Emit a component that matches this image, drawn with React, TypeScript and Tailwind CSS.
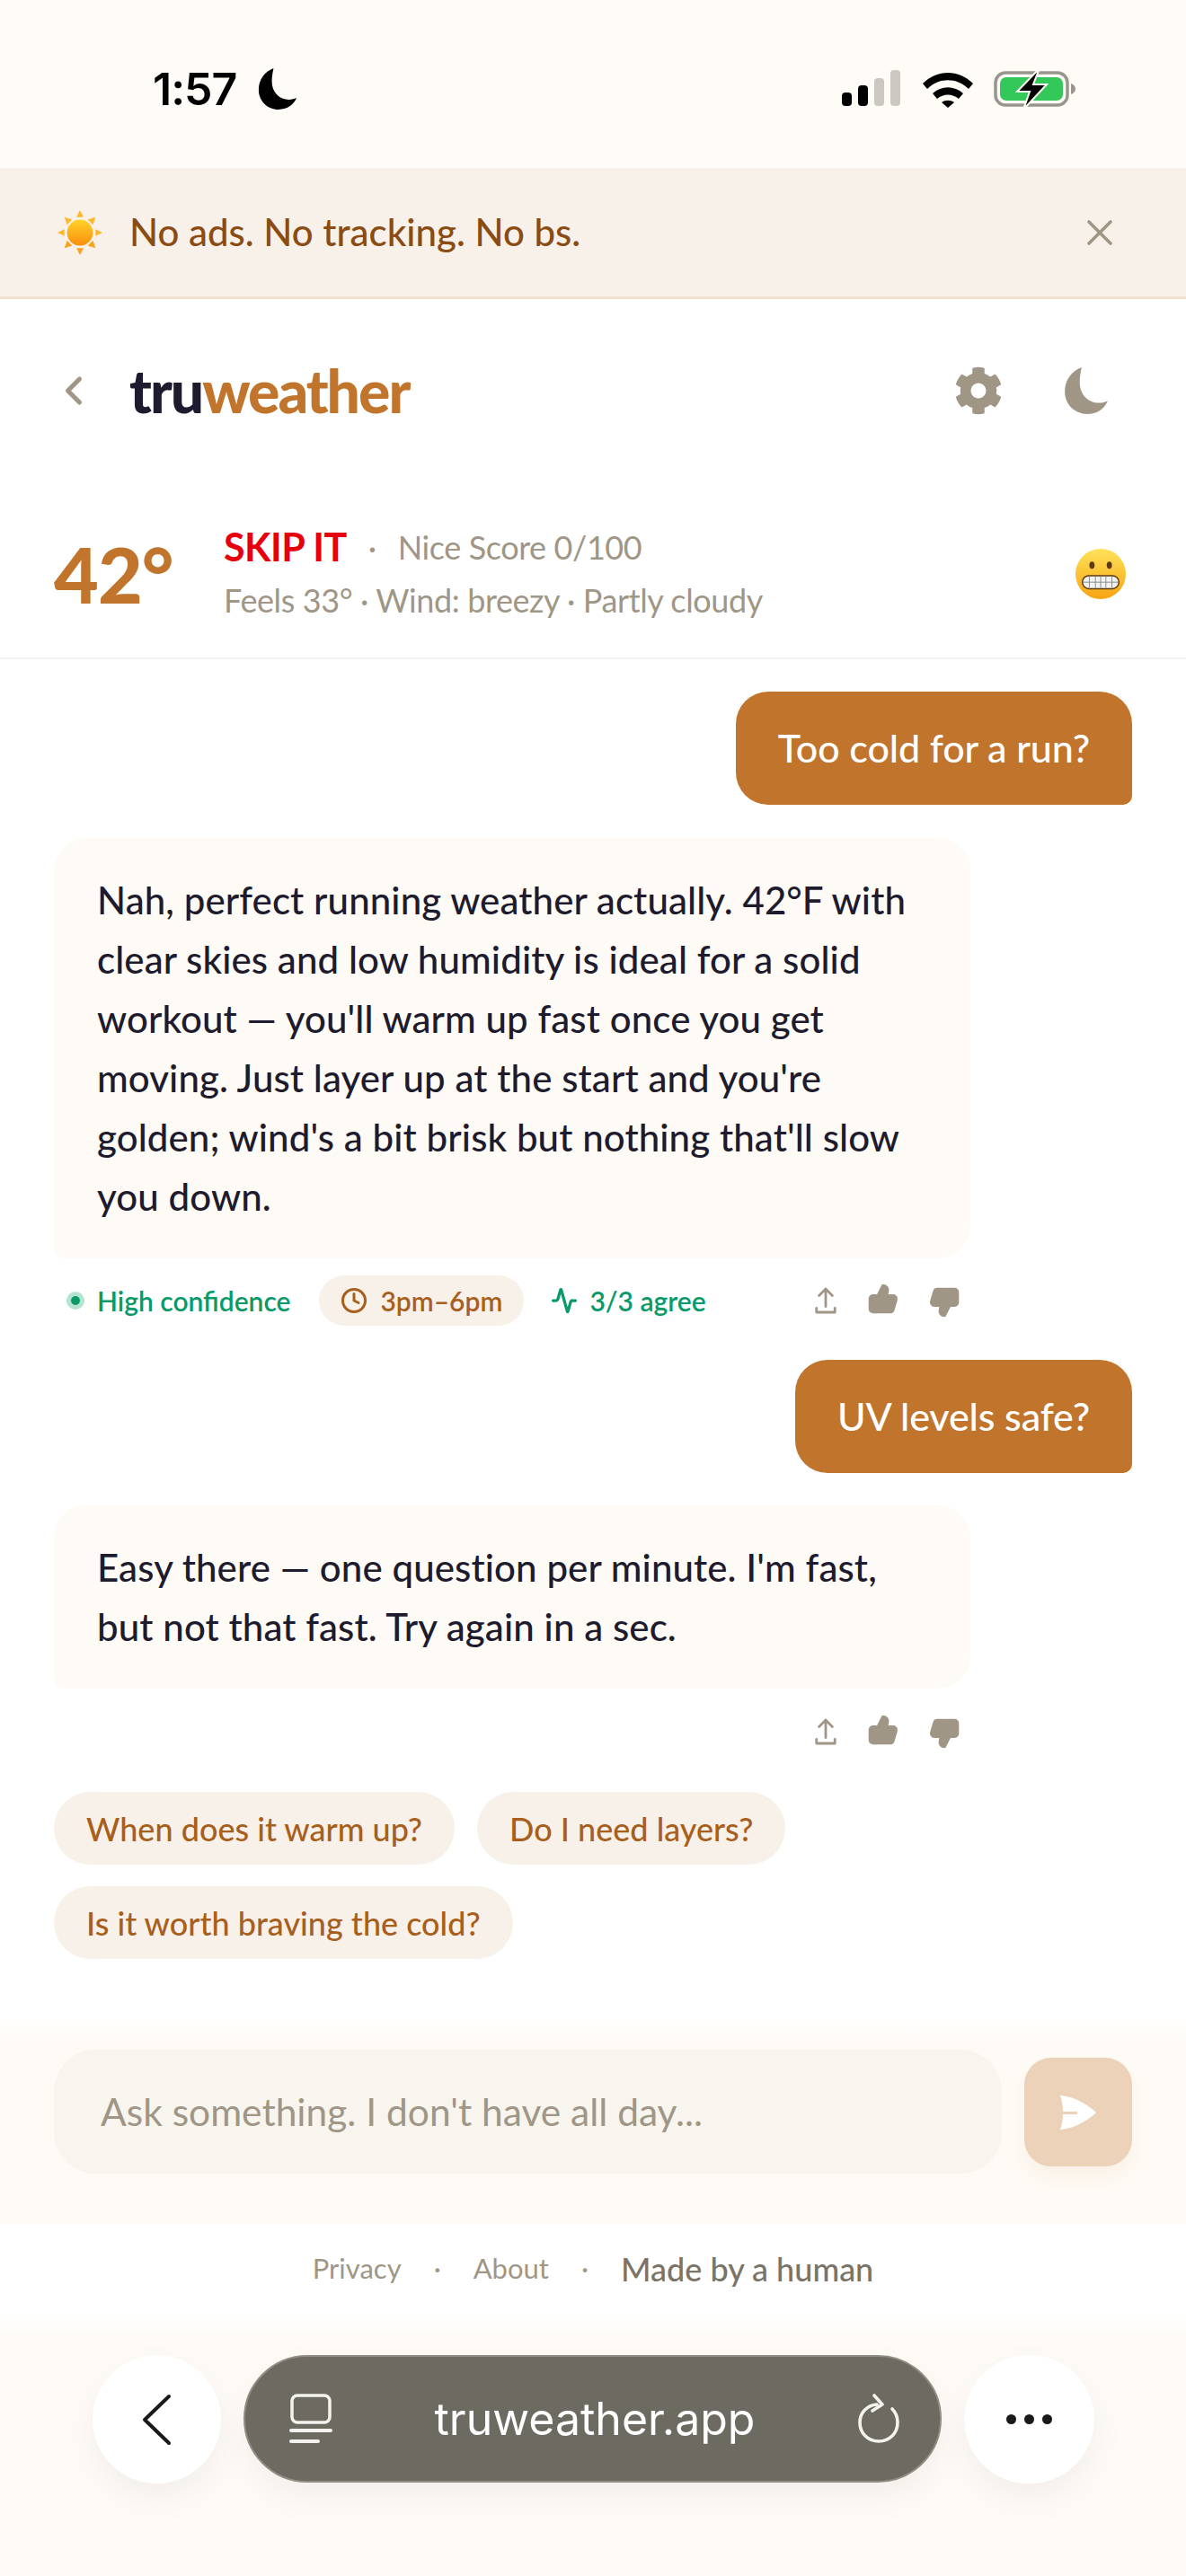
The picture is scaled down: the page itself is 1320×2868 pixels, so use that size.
import { ChevronLeft, Clock, Activity, X, ThumbsUp, ThumbsDown } from 'lucide-react';
import { FaCog } from 'react-icons/fa';

const font = { fontFamily: 'Lato, "Noto Sans", sans-serif' };

function MoonGlyph({ className }: { className: string }) {
  return (
    <svg viewBox="0 0 48 52" className={className} fill="currentColor">
      <path d="M19 1C8 5 1 15 1 27c0 14 11 24 24 24 10 0 18-5 22-14-3 1-6 2-9 2C26 39 17 30 17 17c0-6 1-11 2-16z" />
    </svg>
  );
}

function StatusIcons() {
  return (
    <div className="flex items-center">
      <svg viewBox="0 0 66 42" className="w-[66px] h-[42px] mr-[23px]">
        <rect x="0" y="25" width="11" height="15" rx="4" fill="#000" />
        <rect x="18" y="17" width="11" height="23" rx="4" fill="#000" />
        <rect x="36" y="9" width="11" height="31" rx="4" fill="#cbc8c2" />
        <rect x="54" y="0" width="11" height="40" rx="4" fill="#cbc8c2" />
      </svg>
      <svg viewBox="0 0 58 42" className="w-[58px] h-[42px] mr-[22px]">
        <path d="M1 15C17-1 41-1 57 15l-5 6C39 8 19 8 6 21z" fill="#000" />
        <path d="M12 26c10-9 24-9 34 0l-5 6c-7-6-17-6-24 0z" fill="#000" />
        <path d="M22 36c4-3 10-3 14 0l-7 6z" fill="#000" />
      </svg>
      <svg viewBox="0 0 92 46" className="w-[92px] h-[46px]">
        <rect x="2" y="5" width="80" height="36" rx="11" fill="none" stroke="#98958f" strokeWidth="3.5" />
        <rect x="7" y="10" width="70" height="26" rx="7" fill="#34c759" />
        <path d="M86 17c3 1 5 3 5 6s-2 5-5 6z" fill="#98958f" />
        <path d="M51 0 26 26h14l-7 20 26-28H44z" fill="#000" stroke="#fffcf7" strokeWidth="2" />
      </svg>
    </div>
  );
}

function SunEmoji() {
  return (
    <svg viewBox="0 0 52 52" className="w-[50px] h-[50px]">
      <defs>
        <linearGradient id="sunFill" x1="0" y1="0" x2="0" y2="1">
          <stop offset="0" stopColor="#ffd32a" />
          <stop offset="1" stopColor="#f98e0c" />
        </linearGradient>
      </defs>
      <g fill="#fcb829">
        <path d="M26 0l4 8h-8z" />
        <path d="M26 52l-4-8h8z" fill="#f9a31c" />
        <path d="M0 26l8-4v8z" />
        <path d="M52 26l-8 4v-8z" />
        <path d="M8 8l9 3-6 6z" />
        <path d="M44 8l-3 9-6-6z" />
        <path d="M8 44l3-9 6 6z" fill="#f9a31c" />
        <path d="M44 44l-9-3 6-6z" fill="#f9a31c" />
      </g>
      <circle cx="26" cy="26" r="15" fill="url(#sunFill)" />
    </svg>
  );
}

function GrimaceEmoji() {
  return (
    <svg viewBox="0 0 60 60" className="w-[58px] h-[58px]">
      <defs>
        <linearGradient id="faceFill" x1="0" y1="0" x2="0" y2="1">
          <stop offset="0" stopColor="#ffe25a" />
          <stop offset="1" stopColor="#f7a412" />
        </linearGradient>
      </defs>
      <circle cx="30" cy="30" r="29" fill="url(#faceFill)" />
      <ellipse cx="20" cy="20" rx="3" ry="4.2" fill="#5b3a10" />
      <ellipse cx="40" cy="20" rx="3" ry="4.2" fill="#5b3a10" />
      <rect x="9" y="32" width="42" height="15" rx="7.5" fill="#f2f2f2" stroke="#5b3a10" strokeWidth="1.6" />
      <path d="M10 39.500h40M17 33v13M24 33v13M30 33v13M36 33v13M43 33v13" stroke="#8a8a8a" strokeWidth="1" />
    </svg>
  );
}

function ActionIcons() {
  return (
    <div className="flex items-center gap-[34px] text-[#a09686]">
      <svg viewBox="0 0 28 34" className="w-[26px] h-[32px]" fill="none" stroke="currentColor" strokeWidth="3" strokeLinecap="round" strokeLinejoin="round">
        <path d="M14 24V3M6 11l8-8 8 8M3 26v5h22v-5" />
      </svg>
      <ThumbsUp className="w-[34px] h-[34px] -mt-[4px]" fill="currentColor" strokeWidth={3} />
      <ThumbsDown className="w-[34px] h-[34px] mt-[4px]" fill="currentColor" strokeWidth={3} />
    </div>
  );
}

function Chip({ label }: { label: string }) {
  return (
    <div className="h-[81px] px-[36px] flex items-center rounded-full bg-[#f8f1ea] text-[36px] font-medium text-[#a85f1c]">
      {label}
    </div>
  );
}

function UserBubble({ text }: { text: string }) {
  return (
    <div className="self-end h-[126px] px-[47px] flex items-center rounded-[36px] rounded-br-[10px] bg-[#c1742c] text-white text-[43px] font-medium tracking-[-0.1px]">
      {text}
    </div>
  );
}

export default function App() {
  return (
    <div className="w-[1320px] h-[2868px] flex flex-col overflow-hidden bg-white text-[#1e1b2e]" style={font}>
      <div className="h-[187px] shrink-0 flex items-center justify-between pt-[11px] pl-[170px] pr-[122px] bg-[#fffcf7]">
        <div className="flex items-center gap-[24px]">
          <span className="text-[50px] font-semibold text-black tracking-[-1px]" style={{ fontFamily: 'Inter, sans-serif' }}>1:57</span>
          <MoonGlyph className="w-[44px] h-[50px] text-black" />
        </div>
        <StatusIcons />
      </div>

      <div className="h-[146px] shrink-0 flex items-center justify-between pl-[64px] pr-[72px] bg-[#f8f1ea] border-b-[3px] border-[#f3dfcd]">
        <div className="flex items-center gap-[30px]">
          <SunEmoji />
          <span className="text-[42px] font-medium text-[#8b4c13]">No ads. No tracking. No bs.</span>
        </div>
        <X className="w-[48px] h-[48px] text-[#a09686]" strokeWidth={1.8} />
      </div>

      <div className="h-[214px] shrink-0 flex items-center justify-between pb-[10px] pl-[60px] pr-[86px]">
        <div className="flex items-center gap-[36px]">
          <ChevronLeft className="w-[52px] h-[52px] -ml-[4px] text-[#a09686]" strokeWidth={2.3} />
          <div className="text-[66px] font-black tracking-[-2px] leading-none">
            <span className="text-[#1e1b2e]">tru</span>
            <span className="text-[#c1742c]">weather</span>
          </div>
        </div>
        <div className="flex items-center gap-[68px]">
          <FaCog className="w-[54px] h-[54px] text-[#a09686]" />
          <MoonGlyph className="w-[50px] h-[54px] text-[#a09686]" />
        </div>
      </div>

      <div className="h-[187px] shrink-0 flex items-center justify-between pl-[60px] pr-[66px] pb-[2px] border-b-2 border-[#f3f1ed]">
        <div className="flex items-center gap-[50px]">
          <span className="w-[139px] text-[86px] font-black tracking-[-1px] leading-none text-[#c1742c]">42°</span>
          <div className="flex flex-col gap-[21px] text-[36px] leading-[38px] text-[#a09686] tracking-[-0.4px]">
            <div className="flex items-center">
              <span className="text-[43px] font-bold text-[#e7000b] tracking-[-0.5px]">SKIP IT</span>
              <span className="ml-[24px] mr-[24px]">·</span>
              <span>Nice Score 0/100</span>
            </div>
            <span>Feels 33° · Wind: breezy · Partly cloudy</span>
          </div>
        </div>
        <GrimaceEmoji />
      </div>

      <div className="flex-1 flex flex-col px-[60px] pt-[36px]">
        <UserBubble text="Too cold for a run?" />
        <div className="mt-[37px] w-[1020px] pl-[48px] pr-[50px] py-[36px] rounded-[36px] rounded-bl-[10px] bg-[#fefbf6] text-[42px] tracking-[0.1px] leading-[66px] font-medium">
          Nah, perfect running weather actually. 42°F with clear skies and low humidity is ideal for a solid workout — you'll warm up fast once you get moving. Just layer up at the start and you're golden; wind's a bit brisk but nothing that'll slow you down.
        </div>
        <div className="mt-[19px] w-[1020px] h-[56px] flex items-center justify-between pl-[14px] pr-[12px]">
          <div className="flex items-center text-[30px] font-semibold text-[#0a9a68]">
            <span className="w-[20px] h-[20px] rounded-full bg-[#0a9a68] border-[5px] border-[#b5e3d2]" />
            <span className="ml-[14px]">High confidence</span>
            <div className="ml-[32px] h-[56px] px-[24px] flex items-center gap-[14px] rounded-full bg-[#f8f1ea] text-[#a85f1c]">
              <Clock className="w-[30px] h-[30px]" strokeWidth={2.4} />
              <span>3pm–6pm</span>
            </div>
            <Activity className="ml-[30px] w-[30px] h-[30px]" strokeWidth={2.6} />
            <span className="ml-[13px]">3/3 agree</span>
          </div>
          <ActionIcons />
        </div>
        <div className="mt-[38px] flex justify-end">
          <UserBubble text="UV levels safe?" />
        </div>
        <div className="mt-[36px] w-[1020px] pl-[48px] pr-[50px] py-[36px] rounded-[36px] rounded-bl-[10px] bg-[#fefbf6] text-[42px] tracking-[0.1px] leading-[66px] font-medium">
          Easy there — one question per minute. I'm fast, but not that fast. Try again in a sec.
        </div>
        <div className="mt-[20px] w-[1020px] h-[56px] flex items-center justify-end pr-[12px]">
          <ActionIcons />
        </div>
        <div className="mt-[39px] flex flex-wrap gap-x-[25px] gap-y-[24px]">
          <Chip label="When does it warm up?" />
          <Chip label="Do I need layers?" />
          <Chip label="Is it worth braving the cold?" />
        </div>
      </div>

      <div className="h-[231px] shrink-0 flex items-start gap-[25px] px-[60px] pt-[37px] bg-gradient-to-b from-white to-[#fefbf6] to-[24px]">
        <div className="flex-1 h-[138px] flex items-center pl-[52px] rounded-[46px] bg-[#f8f5ef] text-[42.5px] text-[#a09686]">
          Ask something. I don't have all day...
        </div>
        <div className="mt-[9px] w-[120px] h-[121px] flex items-center justify-center rounded-[30px] bg-[#ebd2b9] shadow-[0_12px_24px_rgba(193,116,44,0.08)]">
          <svg viewBox="0 0 42 38" className="w-[42px] h-[38px]" fill="#fff">
            <path d="M1 0c14 1 28 8 40 19C29 30 15 37 1 38c2-6 3-12 3-17h16v-3H4C4 12 3 6 1 0z" />
          </svg>
        </div>
      </div>

      <div className="h-[99px] shrink-0 flex items-center justify-center text-[31px] text-[#a09686]">
        <span>Privacy</span>
        <span className="ml-[36px]">·</span>
        <span className="ml-[36px]">About</span>
        <span className="ml-[36px]">·</span>
        <span className="ml-[36px] text-[36px] font-medium text-[#7a7368]">Made by a human</span>
      </div>

      <div className="h-[293px] shrink-0 flex items-start pl-[103px] pr-[102px] pt-[47px] gap-[25px] bg-gradient-to-b from-white to-[#fefbf6] to-[24px]">
        <div className="w-[143px] h-[143px] shrink-0 flex items-center justify-center rounded-full bg-white shadow-[0_16px_40px_rgba(0,0,0,0.05)]">
          <svg viewBox="0 0 34 58" className="w-[34px] h-[58px] -ml-[2px]" fill="none" stroke="#1a1a1a" strokeWidth="4" strokeLinecap="round" strokeLinejoin="round">
            <path d="M31 3 4 29l27 26" />
          </svg>
        </div>
        <div className="flex-1 h-[142px] flex items-center justify-between pl-[49px] pr-[44px] rounded-full bg-[#6d6a61] border-[2px] border-[#8f8c84] text-white shadow-[0_16px_40px_rgba(0,0,0,0.05)]">
          <svg viewBox="0 0 48 56" className="w-[48px] h-[56px]" fill="none" stroke="#f5f3ee" strokeLinecap="round">
            <rect x="3" y="2" width="42" height="30" rx="6" strokeWidth="3.5" />
            <path d="M2 41h44" strokeWidth="4" />
            <path d="M2 53h30" strokeWidth="4" />
          </svg>
          <span className="text-[50px]" style={{ fontFamily: 'Inter, sans-serif' }}>truweather.app</span>
          <svg viewBox="0 0 48 56" className="w-[48px] h-[56px]" fill="none" stroke="#f5f3ee" strokeWidth="3.6" strokeLinecap="round" strokeLinejoin="round">
            <path d="M22 12C11 13 3 21 3 32c0 12 9 21 21 21s21-9 21-21c0-6-2-11-6-15" />
            <path d="M19 2l9 10-11 7" />
          </svg>
        </div>
        <div className="w-[145px] h-[143px] shrink-0 flex items-center justify-center gap-[9px] rounded-full bg-white shadow-[0_16px_40px_rgba(0,0,0,0.05)]">
          <span className="w-[11px] h-[11px] rounded-full bg-[#1a1a1a]" />
          <span className="w-[11px] h-[11px] rounded-full bg-[#1a1a1a]" />
          <span className="w-[11px] h-[11px] rounded-full bg-[#1a1a1a]" />
        </div>
      </div>
    </div>
  );
}
